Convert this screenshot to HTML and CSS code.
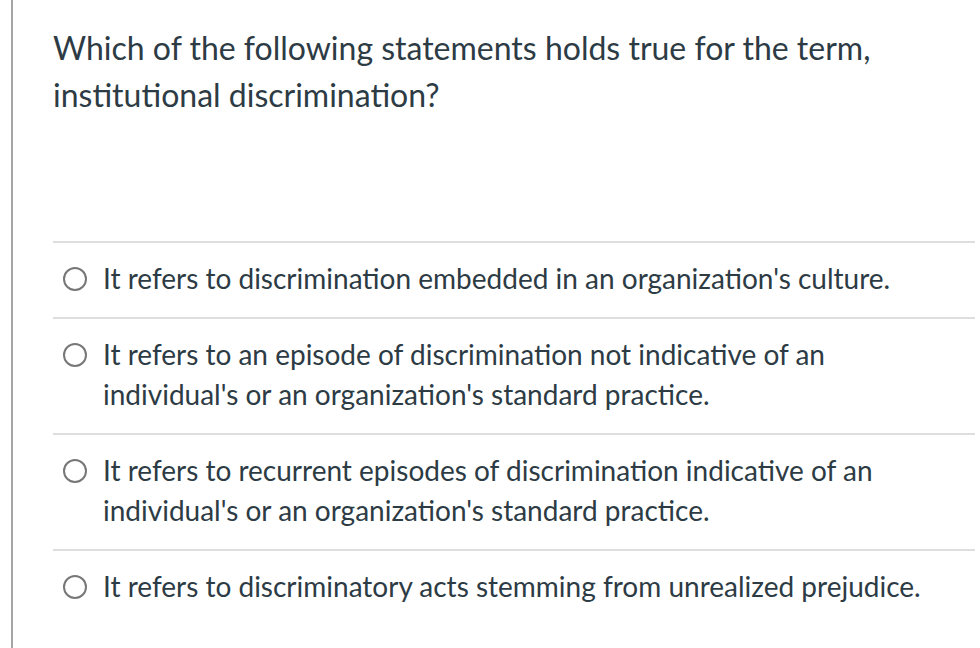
FILE: index.html
```html
<!DOCTYPE html>
<html>
<head>
<meta charset="utf-8">
<link rel="stylesheet" href="styles.css">
</head>
<body>
<div class="page">
  <div class="question">Which of the following statements holds true for the term, institutional discrimination?</div>
  <div class="answers">
    <div class="answer"><span class="radio"></span><span class="label">It refers to discrimination embedded in an organization's culture.</span></div>
    <div class="answer"><span class="radio"></span><span class="label">It refers to an episode of discrimination not indicative of an individual's or an organization's standard practice.</span></div>
    <div class="answer"><span class="radio"></span><span class="label">It refers to recurrent episodes of discrimination indicative of an individual's or an organization's standard practice.</span></div>
    <div class="answer"><span class="radio"></span><span class="label">It refers to discriminatory acts stemming from unrealized prejudice.</span></div>
  </div>
</div>
</body>
</html>
```

FILE: styles.css
```css
html, body {
  margin: 0;
  padding: 0;
  background: #fff;
}
body {
  font-family: Lato, "Noto Sans", sans-serif;
  color: #2d3b45;
}
.page {
  margin-left: 11px;
  border-left: 2px solid #a5a5a5;
  height: 648px;
  box-sizing: border-box;
  padding: 24px 5px 0 40px;
}
.question {
  font-size: 32px;
  line-height: 47px;
  width: 840px;
}
.answers {
  margin-top: 123px;
}
.answer {
  display: flex;
  align-items: flex-start;
  border-top: 2px solid #dedede;
  padding: 15px 0 19px 10px;
  font-size: 28px;
  line-height: 40px;
}
.radio {
  flex: none;
  width: 20px;
  height: 20px;
  border: 2px solid #777;
  border-radius: 50%;
  margin-top: 9px;
  margin-right: 16px;
}
.label {
  width: 840px;
}
```
